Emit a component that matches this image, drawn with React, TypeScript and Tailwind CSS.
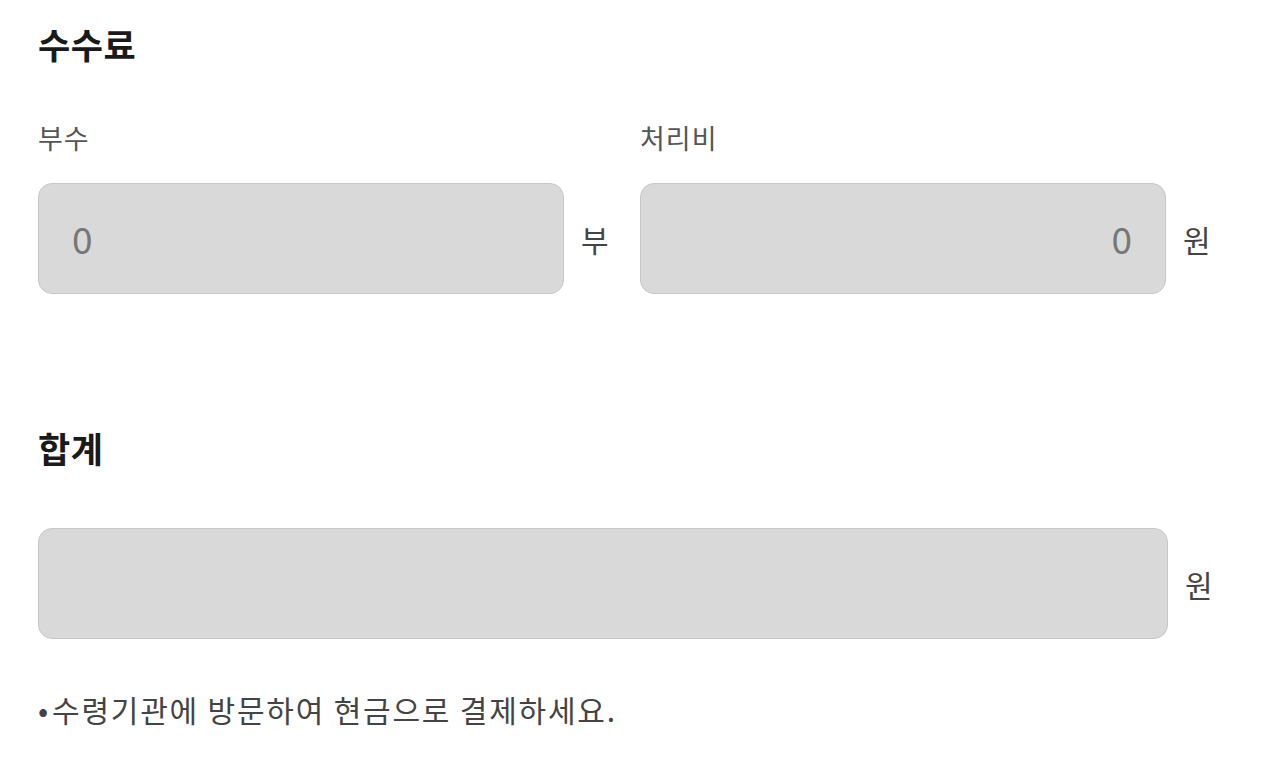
import React from "react";

const font = { fontFamily: '"Noto Sans CJK KR", "Noto Sans", sans-serif' };

type FieldProps = {
  value?: string;
  unit: string;
  align?: "left" | "right";
  width: string;
};

const Field = ({ value, unit, align = "left", width }: FieldProps) => (
  <div className="flex items-center">
    <div
      className={`${width} h-[111px] rounded-[14px] border border-[#c7c7c7] bg-[#d9d9d9] flex items-center px-[33px] ${
        align === "right" ? "justify-end" : "justify-start"
      }`}
    >
      <span className="text-[37px] leading-none text-[#777777]">{value}</span>
    </div>
    <span className="ml-[17px] text-[30px] leading-none text-[#444444]">{unit}</span>
  </div>
);

export default function App() {
  return (
    <div className="w-[1280px] h-[776px] bg-white px-[38px] pt-[22px]" style={font}>
      <h2 className="text-[35px] font-bold leading-[44px] tracking-[0.5px] text-[#1a1a1a]">수수료</h2>

      <div className="flex mt-[56px]">
        <div className="w-[603px]">
          <p className="text-[27px] leading-[32px] tracking-[1px] text-[#555555]">부수</p>
          <div className="mt-[29px]">
            <Field value="0" unit="부" width="w-[526px]" />
          </div>
        </div>
        <div className="w-[603px]">
          <p className="text-[27px] leading-[32px] tracking-[1px] text-[#555555]">처리비</p>
          <div className="mt-[29px]">
            <Field value="0" unit="원" align="right" width="w-[526px]" />
          </div>
        </div>
      </div>

      <h2 className="mt-[132px] text-[35px] font-bold leading-[44px] tracking-[0.5px] text-[#1a1a1a]">합계</h2>

      <div className="mt-[58px]">
        <Field unit="원" width="w-[1130px]" />
      </div>

      <p className="mt-[52px] text-[30px] leading-[36px] tracking-[1.8px] text-[#444444]">
        <span className="mr-[2px]">•</span>수령기관에 방문하여 현금으로 결제하세요.
      </p>
    </div>
  );
}
